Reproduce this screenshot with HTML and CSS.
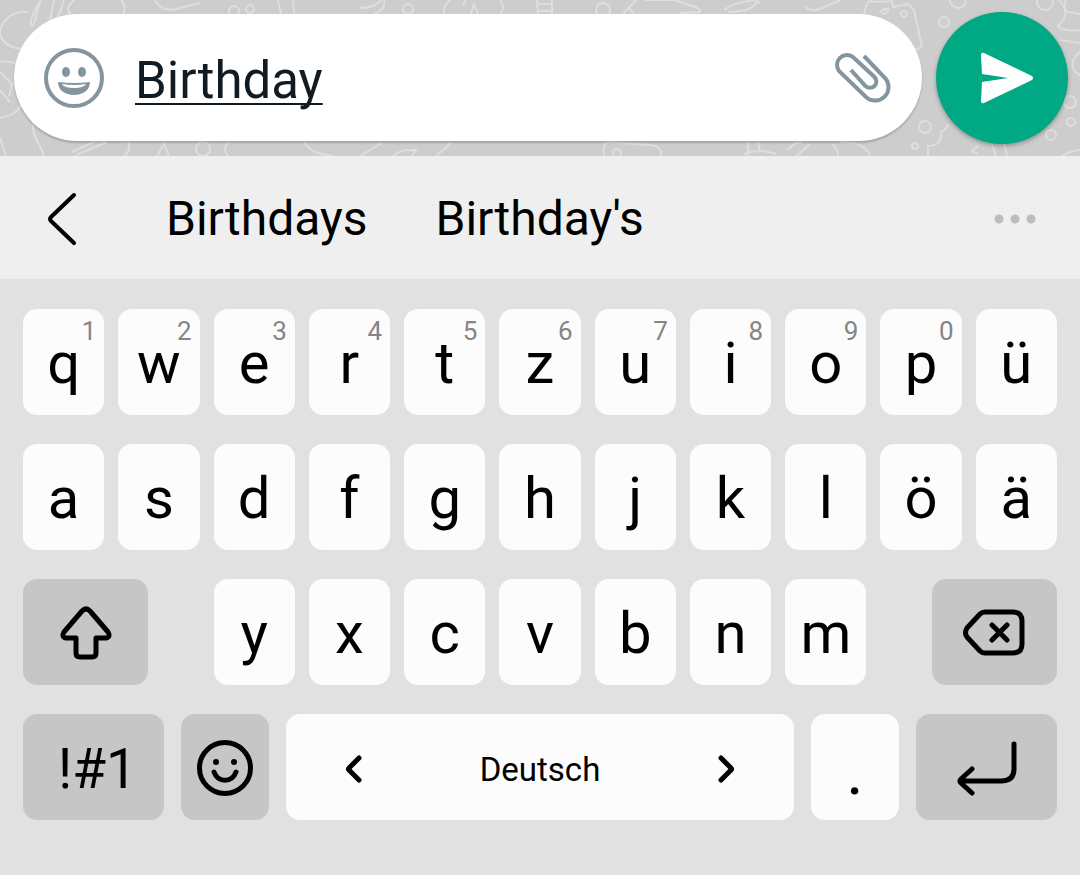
FILE: index.html
```html
<!DOCTYPE html>
<html lang="de">
<head>
  <meta charset="UTF-8" />
  <meta name="viewport" content="width=device-width, initial-scale=1.0" />
  <title>Chat Keyboard</title>
  <link rel="stylesheet" href="styles.css">
</head>
<body>
  <form class="chat-bar">
    <svg class="doodles" viewBox="0 0 1080 156" preserveAspectRatio="xMidYMid slice" aria-hidden="true">
      <path d="M41 0C32 14 29 22 32 26C36 24 35 15 41 0M54 0L49 26M64 0L57 20M75 0C66 6 67 12 71 14M28 12C12 10 0 22 0 34C2 44 14 50 26 48M121 0Q127 6 123 14M155 0C160 9 168 11 176 9L200 3M278 0L281 14M293 0L294 14M0 62C14 60 20 64 22 72M0 72L12 84L9 96M0 90L10 102M0 118C14 116 20 108 22 104M0 138L6 156M34 120C30 136 40 142 44 156M72 152L98 140Q112 142 102 144L76 155M128 142Q132 150 124 156M157 156L164 144L169 156M228 142Q222 150 228 156M304 142C310 152 318 154 334 156" />
      <path d="M360 8Q374 8 382 0M384 0Q386 10 374 14M451 0Q442 6 444 14M466 0L463 6M471 14L474 4L478 14M500 0Q506 8 500 14M537 0L538 14M552 0L552 14M537 4H552M537 11H552M623 14L636 0M629 8L634 14M645 0H675L686 4Q702 8 700 12L680 13M724 10Q734 2 758 0Q754 12 728 12M754 0L760 3M360 156L382 143M393 156C400 150 406 150 416 150L412 156M436 156L451 143M604 156Q602 144 608 142L650 145Q662 146 661 156M748 156L748 142M758 142L760 152M744 154Q760 148 776 154" />
      <path d="M805 6Q808 12 820 9L841 0M864 14L867 3Q869 0 876 2L892 1L893 7L908 4L914 10L921 42Q924 48 914 50M880 12Q886 7 889 10Q888 13 882 14M1066 0Q1062 10 1069 12L1080 14M1059 0Q1072 14 1058 26Q1064 32 1080 30M1060 40L1080 43M1080 52C1070 60 1070 70 1080 75M788 150Q794 142 802 142M796 156Q804 150 810 144M832 144Q838 148 838 156M840 142Q866 142 870 156M928 156V146Q942 146 941 132Q946 130 948 124M978 146L972 151L978 154M992 144L996 156M1004 144L1007 156M1062 156Q1070 151 1080 150" />
      <circle cx="234" cy="11" r="5" /><circle cx="250" cy="9" r="4" /><circle cx="408" cy="9" r="5" /><circle cx="603" cy="10" r="7" />
      <circle cx="904" cy="14" r="3" /><circle cx="958" cy="0" r="8" /><circle cx="1045" cy="2" r="8" /><circle cx="944" cy="22" r="5" />
      <circle cx="925" cy="127" r="6" /><circle cx="915" cy="146" r="3" /><circle cx="1051" cy="135" r="5" /><circle cx="1071" cy="122" r="4" />
      <circle cx="1070" cy="102" r="6" /><circle cx="203" cy="149" r="7" /><circle cx="617" cy="153" r="4" />
    </svg>

    <div class="message">
      <button type="button" class="icon-button" aria-label="Emoji">
        <svg width="60" height="60" viewBox="0 0 60 60">
          <circle cx="30" cy="30" r="28" fill="none" stroke="#84959f" stroke-width="4" />
          <ellipse cx="22" cy="24" rx="4" ry="5" fill="#84959f" />
          <ellipse cx="38" cy="24" rx="4" ry="5" fill="#84959f" />
          <path d="M14 34Q30 36 46 34C46 42 39 47 30 47S14 42 14 34Z" fill="#84959f" />
          <path d="M18 36Q30 38 42 36Q40 40 30 40Q20 40 18 36Z" fill="#fff" />
        </svg>
      </button>
      <input class="message-text" type="text" aria-label="Message" value="Birthday" spellcheck="false" />
      <button type="button" class="icon-button" aria-label="Attach">
        <svg width="60" height="60" viewBox="0 0 60 60">
          <path d="M32 8L53.500 30.500A13.500 13.500 0 0 1 34.500 49.500L7 23A10 10 0 0 1 21 9L42.500 29A6 6 0 0 1 33.500 38L19 22" fill="none" stroke="#84959f" stroke-width="4" />
        </svg>
      </button>
    </div>

    <button type="button" class="send" aria-label="Send">
      <svg width="54" height="52" viewBox="0 0 54 52">
        <path d="M4 1L52 24Q54 26 52 28L4 51Q1 52 1 49L2 30L28 26L2 22L1 3Q1 0 4 1Z" fill="#fff" />
      </svg>
    </button>
  </form>

  <div class="suggestions">
    <button class="back" aria-label="Back">
      <svg width="30" height="52" viewBox="0 0 30 52"><path d="M26 2L3 24Q1 26 3 28L26 50" /></svg>
    </button>
    <button class="suggestion">Birthdays</button>
    <button class="suggestion">Birthday's</button>
    <button class="more" aria-label="More">
      <svg width="42" height="10" viewBox="0 0 42 10"><circle cx="5" cy="5" r="4.5" /><circle cx="21" cy="5" r="4.5" /><circle cx="37" cy="5" r="4.5" /></svg>
    </button>
  </div>

  <div class="keyboard">
    <div class="row">
      <button class="key">q<span class="hint">1</span></button>
      <button class="key">w<span class="hint">2</span></button>
      <button class="key">e<span class="hint">3</span></button>
      <button class="key">r<span class="hint">4</span></button>
      <button class="key">t<span class="hint">5</span></button>
      <button class="key">z<span class="hint">6</span></button>
      <button class="key">u<span class="hint">7</span></button>
      <button class="key">i<span class="hint">8</span></button>
      <button class="key">o<span class="hint">9</span></button>
      <button class="key">p<span class="hint">0</span></button>
      <button class="key">ü</button>
    </div>
    <div class="row">
      <button class="key">a</button>
      <button class="key">s</button>
      <button class="key">d</button>
      <button class="key">f</button>
      <button class="key">g</button>
      <button class="key">h</button>
      <button class="key">j</button>
      <button class="key">k</button>
      <button class="key">l</button>
      <button class="key">ö</button>
      <button class="key">ä</button>
    </div>
    <div class="row">
      <button class="key dark wide" aria-label="Shift">
        <svg width="52" height="54" viewBox="0 0 52 54">
          <path d="M22 5Q26 1 30 5L48 26Q51 31 46 32H36V47Q36 51 32 51H20Q16 51 16 47V32H6Q1 31 4 26Z" />
        </svg>
      </button>
      <button class="key">y</button>
      <button class="key">x</button>
      <button class="key">c</button>
      <button class="key">v</button>
      <button class="key">b</button>
      <button class="key">n</button>
      <button class="key">m</button>
      <button class="key dark wide right" aria-label="Backspace">
        <svg width="62" height="48" viewBox="0 0 62 48">
          <path d="M22 3H50Q59 3 59 12V35Q59 44 50 44H22Q19 44 17 42L4 28Q1 24 4 19L17 5Q19 3 22 3ZM29 16L44 31M44 16L29 31" />
        </svg>
      </button>
    </div>
    <div class="row bottom">
      <button class="key dark symbols">!#1</button>
      <button class="key dark" aria-label="Emoji">
        <svg width="56" height="56" viewBox="0 0 56 56">
          <circle cx="28" cy="28" r="25.5" />
          <circle class="dot" cx="19" cy="22" r="3" /><circle class="dot" cx="37" cy="22" r="3" />
          <path d="M17 32C21 43 35 43 39 32" />
        </svg>
      </button>
      <button class="key space">
        <svg width="18" height="28" viewBox="0 0 18 28"><path d="M15 3L5 13Q4 14 5 15L15 25" /></svg>
        <span>Deutsch</span>
        <svg width="18" height="28" viewBox="0 0 18 28"><path d="M3 3L13 13Q14 14 13 15L3 25" /></svg>
      </button>
      <button class="key period">.</button>
      <button class="key dark" aria-label="Enter">
        <svg width="60" height="54" viewBox="0 0 60 54">
          <path d="M57 3V28Q57 40 44 40H4M15 28L4 38Q2 40 4 42L15 52" />
        </svg>
      </button>
    </div>
  </div>
</body>
</html>
```
FILE: styles.css
```css
* {
  box-sizing: border-box;
}
body {
  margin: 0;
  min-height: 100vh;
  background-color: #e1e1e1;
  color: #000;
  font-family: Roboto, Arial, sans-serif;
}
button, input {
  font: inherit;
  color: inherit;
  border: none;
  padding: 0;
  background: none;
}
button {
  cursor: pointer;
}
svg {
  display: block;
  flex: none;
  overflow: visible;
}
.chat-bar {
  position: relative;
  display: flex;
  align-items: flex-start;
  gap: 14px;
  padding: 12px 12px 12px 14px;
  background-color: #cdcdcd;
}
.doodles {
  position: absolute;
  inset: 0;
  width: 100%;
  height: 100%;
  overflow: hidden;
  fill: none;
  stroke: #dedede;
  stroke-width: 2;
}
.message {
  position: relative;
  flex: 1;
  display: flex;
  align-items: center;
  gap: 31px;
  height: 127px;
  margin-top: 2px;
  padding: 0 30px;
  border-radius: 64px;
  background-color: #fff;
  box-shadow: 0 2px 2px rgba(0, 0, 0, 0.2);
}
.message-text {
  flex: 1;
  min-width: 0;
  height: 72px;
  padding-top: 6px;
  color: #111b21;
  font-size: 51px;
  text-decoration: underline;
  text-decoration-thickness: 2px;
  text-decoration-skip-ink: none;
  text-underline-offset: 5px;
  outline: none;
}
.send {
  position: relative;
  display: flex;
  align-items: center;
  justify-content: center;
  width: 132px;
  height: 132px;
  padding-left: 10px;
  border-radius: 50%;
  background-color: #00a884;
  box-shadow: 0 2px 4px rgba(0, 0, 0, 0.3);
}
.suggestions {
  display: flex;
  align-items: center;
  height: 123px;
  padding: 2px 44px 0 48px;
  background-color: #efefef;
  font-size: 48px;
}
.back {
  margin-right: 88px;
  fill: none;
  stroke: #000;
  stroke-width: 4;
  stroke-linecap: round;
}
.suggestion {
  margin-right: 68px;
}
.more {
  margin-left: auto;
  fill: #bdbdbd;
}
.keyboard {
  display: grid;
  gap: 29px;
  padding: 30px 23px 54px;
}
.row {
  display: grid;
  grid-template-columns: repeat(11, 1fr);
  gap: 14px;
}
.bottom {
  grid-template-columns: 141fr 88fr 508fr 88fr 141fr;
  gap: 17px;
}
.key {
  position: relative;
  display: flex;
  align-items: center;
  justify-content: center;
  min-width: 0;
  height: 106px;
  padding-top: 2px;
  border-radius: 14px;
  background-color: #fcfcfc;
  font-size: 58px;
  line-height: 1;
  fill: none;
  stroke-linecap: round;
  stroke-linejoin: round;
}
.key svg {
  stroke: #000;
  stroke-width: 5;
}
.key .dot {
  fill: #000;
  stroke: none;
}
.dark {
  background-color: #c6c6c6;
}
.wide {
  grid-column: span 2;
  width: 71%;
}
.right {
  justify-self: end;
}
.hint {
  position: absolute;
  top: 9px;
  right: 8px;
  color: #858585;
  font-size: 26px;
}
.symbols {
  padding: 4px 0 0 8px;
  font-size: 55px;
}
.space {
  justify-content: space-between;
  padding: 4px 58px 0;
  font-size: 33px;
}
.period {
  padding-top: 10px;
  font-size: 66px;
}
```
